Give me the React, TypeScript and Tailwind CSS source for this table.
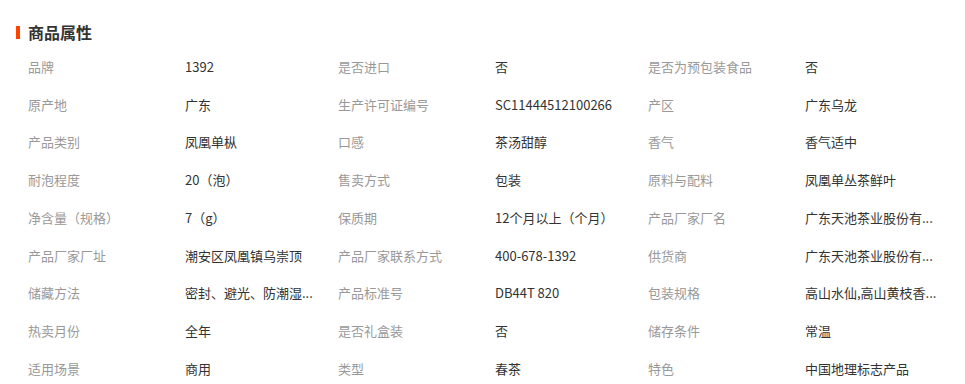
import React from "react";

const rows: [string, string][][] = [
  [["品牌", "1392"], ["是否进口", "否"], ["是否为预包装食品", "否"]],
  [["原产地", "广东"], ["生产许可证编号", "SC11444512100266"], ["产区", "广东乌龙"]],
  [["产品类别", "凤凰单枞"], ["口感", "茶汤甜醇"], ["香气", "香气适中"]],
  [["耐泡程度", "20（泡）"], ["售卖方式", "包装"], ["原料与配料", "凤凰单丛茶鲜叶"]],
  [["净含量（规格）", "7（g）"], ["保质期", "12个月以上（个月）"], ["产品厂家厂名", "广东天池茶业股份有..."]],
  [["产品厂家厂址", "潮安区凤凰镇乌崇顶"], ["产品厂家联系方式", "400-678-1392"], ["供货商", "广东天池茶业股份有..."]],
  [["储藏方法", "密封、避光、防潮湿..."], ["产品标准号", "DB44T 820"], ["包装规格", "高山水仙,高山黄枝香..."]],
  [["热卖月份", "全年"], ["是否礼盒装", "否"], ["储存条件", "常温"]],
  [["适用场景", "商用"], ["类型", "春茶"], ["特色", "中国地理标志产品"]],
];

export default function App() {
  return (
    <div
      className="w-[965px] h-[384px] bg-white overflow-hidden pt-[24px]"
      style={{ fontFamily: '"Noto Sans CJK SC", "Liberation Sans", sans-serif' }}
    >
      <div className="flex items-center h-[16px] pl-[16px]">
        <div className="w-[4px] h-[13px] bg-[#ff4400]" />
        <div className="ml-[8px] text-[16px] leading-[20px] font-bold text-[#333]">商品属性</div>
      </div>
      <div className="mt-[8px] pl-[28px]">
        {rows.map((row, i) => (
          <div key={i} className="flex h-[37.75px] items-center text-[13px] leading-[20px]">
            {row.map(([k, v], j) => (
              <div key={j} className="flex w-[310px] items-center">
                <div className="w-[157px] text-[#999] whitespace-nowrap">{k}</div>
                <div className="w-[150px] text-[#333] whitespace-nowrap">{v}</div>
              </div>
            ))}
          </div>
        ))}
      </div>
    </div>
  );
}
